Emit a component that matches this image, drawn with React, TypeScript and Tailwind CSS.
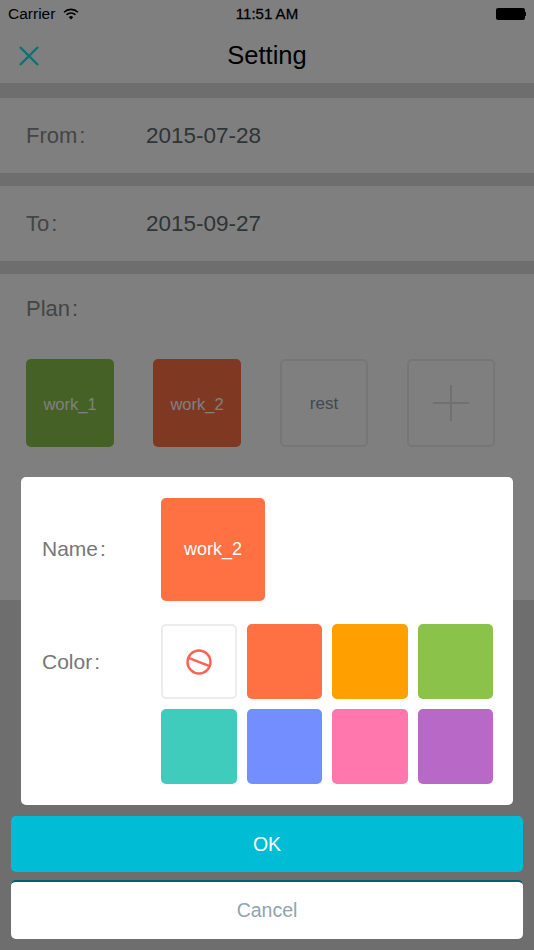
const plans = [
  { label: 'work_1', className: 'bg-[#8bc34a] text-white text-[16.5px]' },
  { label: 'work_2', className: 'bg-[#ff7043] text-white text-[16.5px]' },
  { label: 'rest', className: 'border-2 border-[#ececec] text-[#7f939e] text-[17px]' },
]

const swatches = ['bg-[#ff7043]', 'bg-[#ffa000]', 'bg-[#8bc34a]', 'bg-[#40ccbc]', 'bg-[#738fff]', 'bg-[#ff77ad]', 'bg-[#b868c6]']

function StatusBar() {
  return (
    <div className="flex h-[29px] items-center justify-between pl-2 pr-[8px] pb-[1px] text-[15.5px] text-black">
      <div className="flex items-center gap-[8px]">
        <span>Carrier</span>
        <svg width="16" height="12" viewBox="0 0 16 12" fill="none" stroke="currentColor" strokeWidth="1.6">
          <path d="M1 4.2a10 10 0 0 1 14 0" />
          <path d="M3.5 6.8a6.4 6.4 0 0 1 9 0" />
          <path d="M8 11.5 5.8 9.2a3.1 3.1 0 0 1 4.4 0Z" fill="currentColor" stroke="none" />
        </svg>
      </div>
      <span className="absolute left-0 right-0 text-center text-[15px] [-webkit-text-stroke:0.3px_black]">11:51 AM</span>
      <div className="flex items-center">
        <div className="h-[12px] w-[29px] rounded-[2px] bg-black" />
        <div className="h-[4px] w-[1.5px] bg-black" />
      </div>
    </div>
  )
}

function Label({ text, className }: { text: string; className: string }) {
  return (
    <span className={className}>
      {text}
      <span className="ml-[2px]">:</span>
    </span>
  )
}

function Row({ label, value }: { label: string; value: string }) {
  return (
    <div className="flex h-[75px] items-center bg-white pl-[26px] text-[22px]">
      <Label text={label} className="w-[120px] text-[#8a8a8a]" />
      <span className="text-[22.5px] text-[#5a6a70]">{value}</span>
    </div>
  )
}

export default function App() {
  return (
    <div className="relative h-[950px] w-[534px] overflow-hidden bg-[#dcdcdc] font-['Liberation_Sans',sans-serif]">
      <div className="bg-white">
        <StatusBar />
        <div className="relative flex h-[54px] items-center justify-center pb-[2px]">
          <svg className="absolute left-[19px] top-[17px]" width="20" height="20" viewBox="0 0 20 20" stroke="#00e5f0" strokeWidth="2.2">
            <path d="M1 1 19 19M19 1 1 19" />
          </svg>
          <span className="text-[25.5px] text-black">Setting</span>
        </div>
      </div>

      <div className="mt-[15px]">
        <Row label="From" value="2015-07-28" />
      </div>
      <div className="mt-[13px]">
        <Row label="To" value="2015-09-27" />
      </div>

      <div className="mt-[13px] h-[326px] bg-white px-[26px]">
        <div className="flex h-[68px] items-center text-[22px] text-[#8a8a8a]">
          <Label text="Plan" className="" />
        </div>
        <div className="mt-[17px] flex justify-between pr-[13px]">
          {plans.map(p => (
            <div key={p.label} className={`flex h-[88px] w-[88px] items-center justify-center rounded-[5px] pt-[2px] ${p.className}`}>
              {p.label}
            </div>
          ))}
          <div className="flex h-[88px] w-[88px] items-center justify-center rounded-[5px] border-2 border-[#ececec]">
            <svg width="36" height="36" viewBox="0 0 36 36" stroke="#e0e0e0" strokeWidth="2">
              <path d="M18 0v36M0 18h36" />
            </svg>
          </div>
        </div>
      </div>

      {/* dim layer with the color picker */}
      <div className="absolute inset-0 flex flex-col items-center justify-end bg-black/50 pb-[11px]">
        <div className="mb-[11px] w-[492px] rounded-[5px] bg-white pl-[21px] pr-[20px] pt-[21px] pb-[21px]">
          <div className="flex items-center">
            <Label text="Name" className="w-[119px] pb-[2px] text-[21px] text-[#777]" />
            <div className="flex h-[103px] w-[104px] items-center justify-center rounded-[5px] bg-[#ff7043] text-[18px] text-white">
              work_2
            </div>
          </div>
          <div className="mt-[23px] flex">
            <Label text="Color" className="flex h-[75px] w-[119px] items-center text-[21px] text-[#777]" />
            <div className="grid w-[332px] grid-cols-4 gap-x-[10px] gap-y-[10px]">
              <div className="flex h-[75px] items-center justify-center rounded-[5px] border-2 border-[#ececec]">
                <svg width="28" height="28" viewBox="0 0 28 28" fill="none" stroke="#ff6255" strokeWidth="2.4">
                  <circle cx="14" cy="14" r="11.5" />
                  <path d="M3.5 9.8 24.5 18.2" />
                </svg>
              </div>
              {swatches.map(c => (
                <div key={c} className={`h-[75px] rounded-[5px] ${c}`} />
              ))}
            </div>
          </div>
        </div>
        <div className="flex h-[56px] w-[512px] items-center justify-center rounded-[5px] bg-[#00bcd4] pt-[1px] text-[19.5px] text-white">OK</div>
        <div className="mt-[8px] flex h-[59px] w-[512px] items-center justify-center rounded-[5px] border-t-2 border-[#00606c] bg-white pt-[1px] text-[19.5px] text-[#90a4ae]">Cancel</div>
      </div>
    </div>
  )
}
